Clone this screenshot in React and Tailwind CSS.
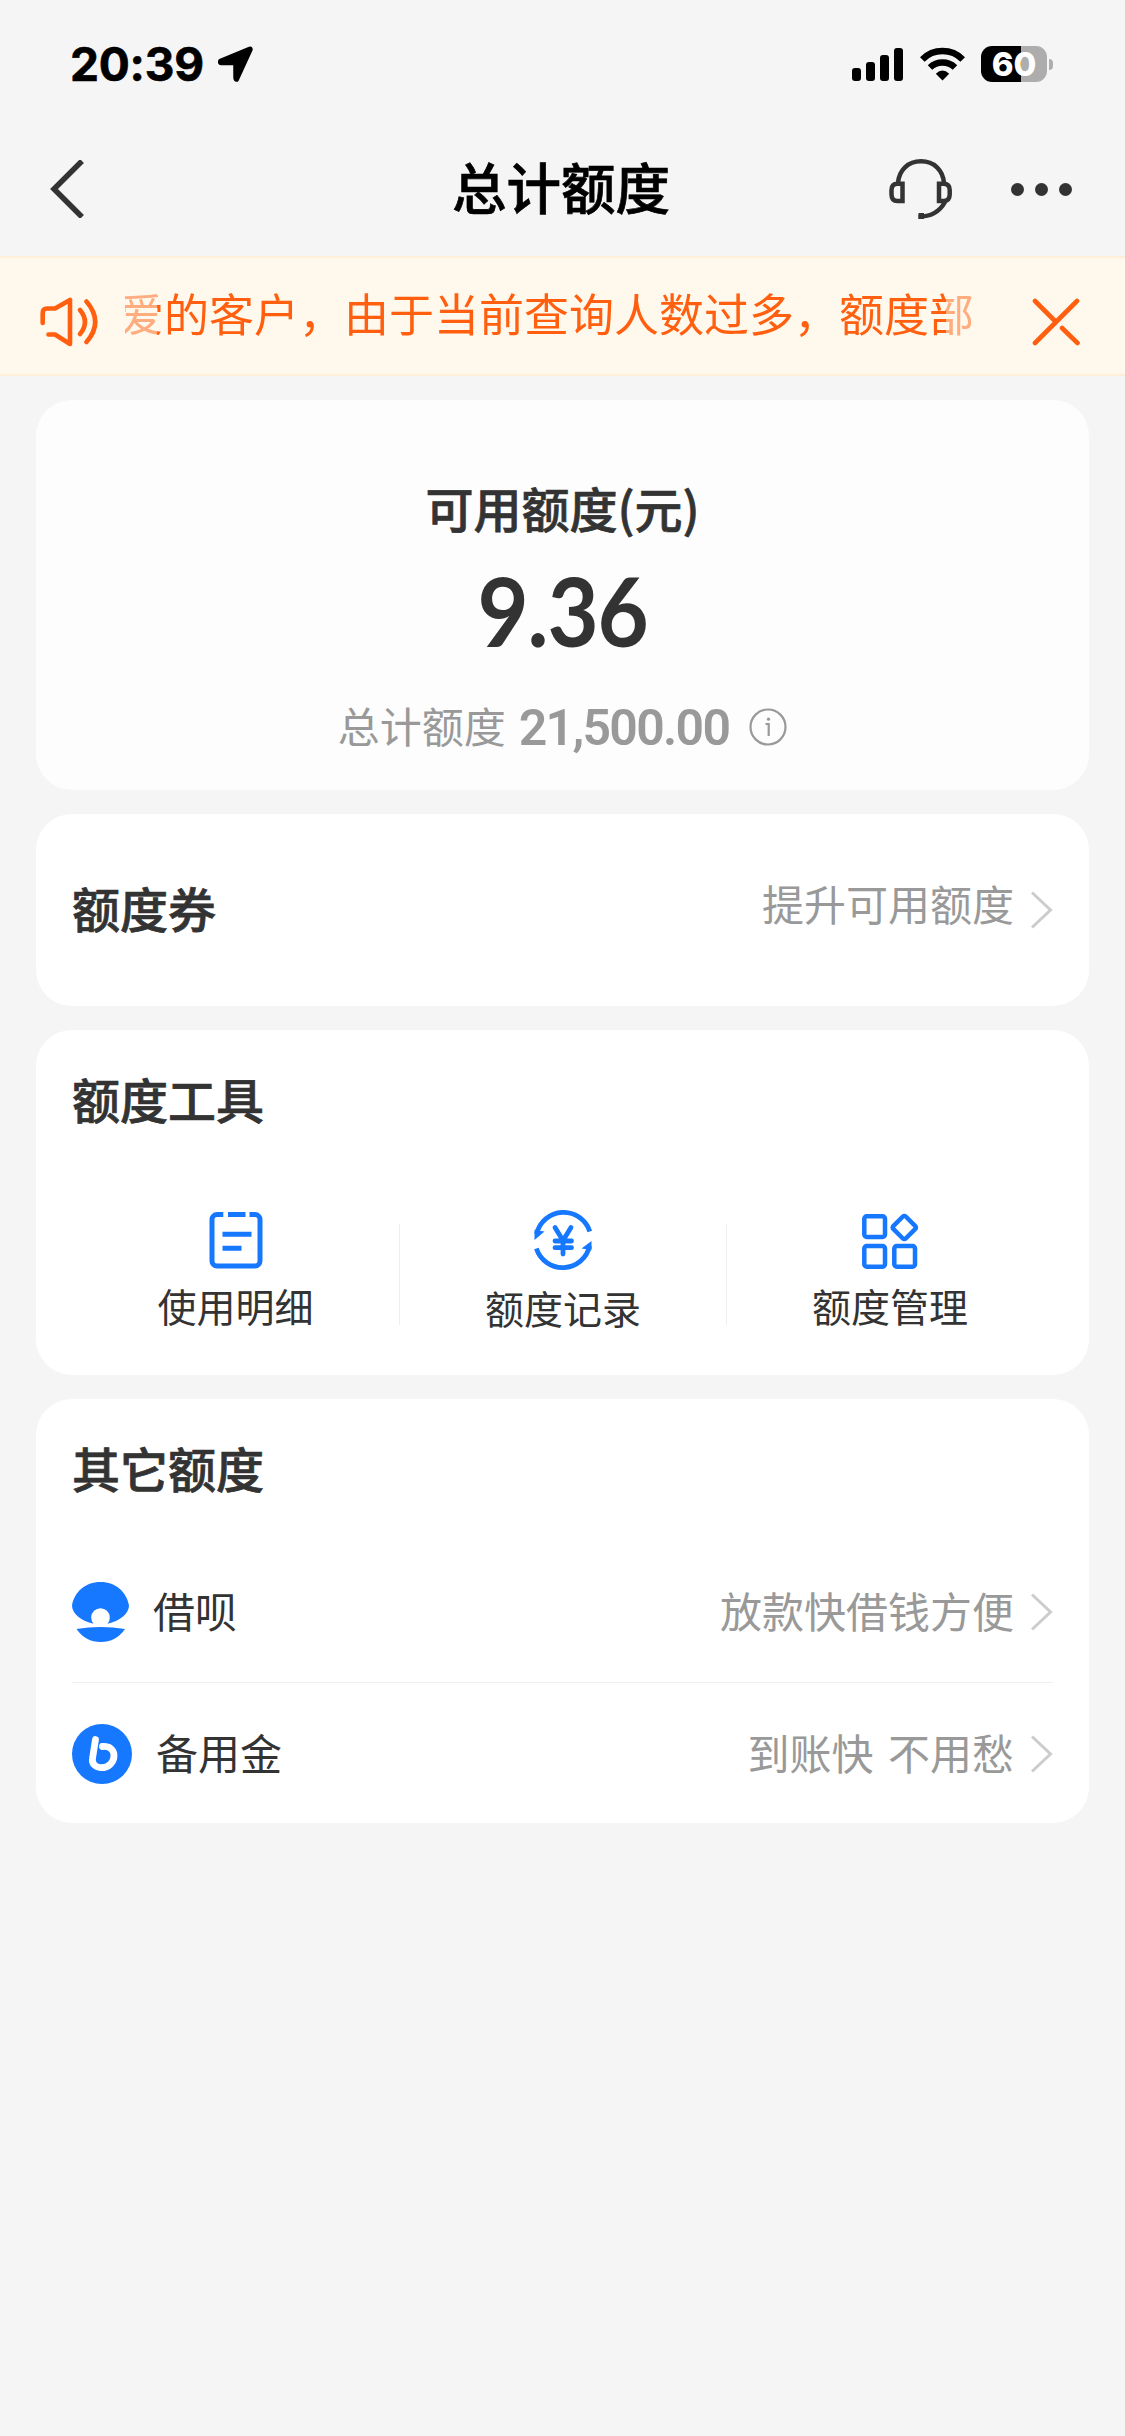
const tools = [
  { label: "使用明细", Icon: DetailIcon, labelClass: "mt-[14px]" },
  { label: "额度记录", Icon: RecordIcon, labelClass: "mt-[16px]" },
  { label: "额度管理", Icon: ManageIcon, labelClass: "mt-[14px]" },
];

const others = [
  { name: "借呗", desc: "放款快借钱方便", Icon: JiebeiIcon },
  { name: "备用金", desc: "到账快 不用愁", Icon: ReserveIcon },
];

function DetailIcon() {
  return (
    <svg className="w-[60px] h-[60px]" viewBox="0 0 60 60" fill="none" stroke="#1677ff" strokeWidth="5">
      <path d="M17.300 4.500H11a5 5 0 0 0-5 5v41.500A5 5 0 0 0 11 56H49a5 5 0 0 0 5-5v-41.500A5 5 0 0 0 49 4.500h-5.500" />
      <path d="M22 4.500h17.500M16.500 24.200H45.500M16.500 38.300H35.500" />
    </svg>
  );
}

function RecordIcon() {
  return (
    <svg className="w-[60px] h-[60px]" viewBox="0 0 60 60" fill="none" stroke="#1677ff" strokeWidth="4.800">
      <path d="M3.600 24A27.600 27.600 0 0 1 56.800 21.500" />
      <path d="M3.400 38.500A27.600 27.600 0 0 0 56.600 36" />
      <path d="M1.500 20l10 1.500L1.500 30z" fill="#1677ff" stroke="none" />
      <path d="M58.500 31v9l-10-1.500z" fill="#1677ff" stroke="none" />
      <path
        d="M22 17.500L30 30.500l8-13M30 30.500v13.500M22 31h16.500M22 37.700h16.500"
        strokeLinecap="round"
        strokeLinejoin="round"
      />
    </svg>
  );
}

function ManageIcon() {
  return (
    <svg className="w-[60px] h-[60px]" viewBox="0 0 60 60" fill="none" stroke="#1677ff" strokeWidth="4.500">
      <rect x="4.300" y="6.300" width="20.700" height="20.700" rx="2.500" />
      <rect x="4.300" y="36" width="20.700" height="20.700" rx="2.500" />
      <rect x="34.300" y="36" width="20.700" height="20.700" rx="2.500" />
      <rect x="35.500" y="8.700" width="17.600" height="17.600" rx="2" transform="rotate(45 44.300 17.500)" />
    </svg>
  );
}

function JiebeiIcon() {
  return (
    <svg className="w-[57px] h-[60px]" viewBox="0 0 57 60" fill="#1677ff">
      <path d="M28.500 0C44 0 54.500 10 57 23.500C57 32 47.500 39 35.500 41.700A9.300 9.300 0 1 0 21.500 41.700C9.500 39 0 32 0 23.500C2.500 10 13 0 28.500 0Z" />
      <path d="M4.500 47Q28.500 43 53 47Q44 60 28.700 60Q13.500 60 4.500 47Z" />
    </svg>
  );
}

function ReserveIcon() {
  return (
    <svg className="w-[60px] h-[60px]" viewBox="0 0 60 60" fill="none">
      <circle cx="30" cy="30" r="30" fill="#1677ff" />
      <path
        d="M23.500 15.500L20.500 34.500C19.500 40 24 43.700 29.500 43.700C36.500 43.700 42 38.500 42 31.500C42 25.500 37.500 22 30.500 22.500"
        stroke="#fff"
        strokeWidth="6.800"
        strokeLinecap="round"
      />
    </svg>
  );
}

function Arrow() {
  return (
    <svg className="w-[22px] h-[38px] shrink-0" viewBox="0 0 22 38" fill="none" stroke="#ccc" strokeWidth="3">
      <path d="M1 1.500L19.500 19L1 36.500" />
    </svg>
  );
}

const Title = ({ children }) => (
  <h2 className="text-[48px] font-medium leading-[48px] [-webkit-text-stroke:0.7px_#333]">{children}</h2>
);

const StatusBar = () => {
  return (
    <div className="flex h-[128px] items-center justify-between pl-[70px] pr-[72px]">
      <div className="flex items-center">
        <span className="font-['Inter',sans-serif] text-[46px] font-bold leading-none tracking-[-0.2px] text-black [-webkit-text-stroke:0.6px_#000]">
          20:39
        </span>
        <svg className="ml-[12px] w-[38px] h-[38px]" viewBox="0 0 38 38">
          <path
            d="M33 3.500L4 15.500Q3 18.500 5 18.500H19V32Q19 35.500 21 35L35 4.500Q35 2.500 33 3.500Z"
            stroke="#000"
            strokeWidth="3.500"
            strokeLinejoin="round"
          />
        </svg>
      </div>
      <div className="flex items-center">
        {/* Signal */}
        <div className="flex items-end gap-[5px] h-[33px]">
          <div className="w-[9px] h-[13px] rounded-[3px] bg-black" />
          <div className="w-[9px] h-[19px] rounded-[3px] bg-black" />
          <div className="w-[9px] h-[26px] rounded-[3px] bg-black" />
          <div className="w-[9px] h-[33px] rounded-[3px] bg-black" />
        </div>
        {/* Wifi */}
        <svg className="ml-[17px] w-[45px] h-[34px]" viewBox="0 0 45 34" fill="none" stroke="#000" strokeWidth="6.500">
          <path d="M2.300 12.500A28.500 28.500 0 0 1 42.700 12.500" />
          <path d="M10 20.500A18 18 0 0 1 35 20.500" />
          <path d="M22.500 33.500L15.800 26.700Q22.500 20.500 29.200 26.700Z" fill="#000" stroke="none" />
        </svg>
        {/* Battery */}
        <div className="ml-[16px] flex h-[36px] w-[66px] items-center justify-center rounded-[11px] bg-linear-to-r from-black from-[61%] to-[#adadad] to-[61%]">
          <span className="font-['Inter',sans-serif] text-[33px] font-extrabold leading-none text-white">60</span>
        </div>
        <div className="ml-[2px] h-[11px] w-[4px] rounded-r-full bg-[#adadad]" />
      </div>
    </div>
  );
};

const NavBar = () => {
  return (
    <div className="grid h-[128px] grid-cols-3 items-center pb-[6px] pl-[50px] pr-[53px]">
      <svg className="w-[34px] h-[58px]" viewBox="0 0 34 58" fill="none" stroke="#333" strokeWidth="5.500">
        <path d="M32 1L4 29L32 57" />
      </svg>
      <h1 className="-mt-[6px] whitespace-nowrap text-center text-[54.500px] font-medium leading-none text-black [-webkit-text-stroke:0.7px_#000]">
        总计额度
      </h1>
      <div className="flex items-center justify-end">
        <svg className="w-[63px] h-[60px]" viewBox="0 0 63 60" fill="none" stroke="#333" strokeWidth="4.500">
          <path d="M9 24C10 11 19 2.300 32 2.300S54 11 55 24" />
          <path d="M13.500 24.700H8.500Q2.500 24.700 2.500 31V35.500Q2.500 42 8.500 42H13.500Z" />
          <path d="M50 24.700H54.500Q60.700 24.700 60.700 31V35.500Q60.700 42 54.500 42H50Z" />
          <path d="M56 43C51 52 43 57.700 29.500 57.700" />
          <path d="M29.500 57H35" strokeWidth="6" />
        </svg>
        <div className="ml-[59px] flex gap-[11px]">
          <span className="size-[13px] rounded-full bg-[#333]" />
          <span className="size-[13px] rounded-full bg-[#333]" />
          <span className="size-[13px] rounded-full bg-[#333]" />
        </div>
      </div>
    </div>
  );
};

const NoticeBar = () => {
  return (
    <div className="flex h-[120px] items-center border-y-2 border-[#ffefd8] bg-[#fff8ec] pl-[38px] pr-[45px]">
      <svg
        className="mt-[12px] w-[60px] h-[52px] shrink-0"
        viewBox="0 0 60 52"
        fill="none"
        stroke="#ff5f0f"
        strokeWidth="4.600"
        strokeLinecap="round"
        strokeLinejoin="round"
      >
        <path d="M4.700 27V17Q4.700 12.500 9 12.500H17L32 4V48L17 38.500H10.500" />
        <path d="M42 14Q52 26 42 38" />
        <path d="M48.500 5.500Q66 26 48.500 46" />
      </svg>
      <div className="ml-[27px] w-[847px] overflow-hidden whitespace-nowrap mask-[linear-gradient(to_right,rgba(0,0,0,0.5)_32px,#000_32px,#000_821px,rgba(0,0,0,0.5)_821px)]">
        <p className="-ml-[6px] -mt-[6px] text-[45px] leading-[66px] text-[#ff5f0f]">
          爱的客户，由于当前查询人数过多，额度部
        </p>
      </div>
      <svg
        className="ml-auto mt-[12px] w-[48px] h-[48px] shrink-0"
        viewBox="0 0 48 48"
        fill="none"
        stroke="#ff5f0f"
        strokeWidth="4.600"
        strokeLinecap="round"
      >
        <path d="M45 3L3 45M3 3L24 24M30 30L45.500 45" />
      </svg>
    </div>
  );
};

const App = () => {
  return (
    <div className="flex min-h-[2436px] w-[1125px] flex-col bg-[#f5f5f5] font-['Noto_Sans_CJK_SC',sans-serif] text-[#333]">
      <StatusBar />
      <NavBar />
      <NoticeBar />

      <main className="flex flex-col gap-[24px] px-[36px] pt-[24px]">
        {/* Available amount */}
        <section className="flex h-[390px] flex-col items-center rounded-[36px] bg-[#fdfdfd] pt-[83px]">
          <Title>可用额度(元)</Title>
          <p className="mt-[31px] scale-x-[0.93] font-['Lato',sans-serif] text-[95px] font-bold leading-[96px] tracking-[-1.200px] [font-kerning:none]">
            9.36
          </p>
          <div className="mt-[43px] flex items-center text-[#999]">
            <span className="text-[42px] leading-[42px]">总计额度</span>
            <span className="ml-[13px] mt-[6px] font-['Roboto',sans-serif] text-[50px] font-semibold leading-[42px] tracking-[-1.700px]">
              21,500.00
            </span>
            <svg className="ml-[20px] mt-[4px] w-[38px] h-[38px]" viewBox="0 0 38 38" fill="none" stroke="#999" strokeWidth="2.200">
              <circle cx="19" cy="19" r="17.500" />
              <path d="M16.500 16H19.700V28" />
              <circle cx="19.500" cy="11.200" r="1.600" fill="#999" stroke="none" />
            </svg>
          </div>
        </section>

        {/* Coupon */}
        <section className="flex h-[192px] items-center rounded-[36px] bg-white px-[36px]">
          <div className="mb-[7px]">
            <Title>额度券</Title>
          </div>
          <span className="mb-[14px] ml-auto mr-[17px] text-[42px] leading-[42px] text-[#999]">提升可用额度</span>
          <Arrow />
        </section>

        {/* Tools */}
        <section className="h-[345px] rounded-[36px] bg-white px-[36px] pt-[44px]">
          <Title>额度工具</Title>
          <div className="mt-[88px] grid grid-cols-[328px_327px_1fr]">
            {tools.map(({ label, Icon, labelClass }, i) => (
              <div key={label} className="flex">
                <div className="flex flex-1 flex-col items-center">
                  <Icon />
                  <span className={`${labelClass} text-[39px] leading-[42px]`}>{label}</span>
                </div>
                {i < tools.length - 1 && <div className="mt-[14px] h-[101px] w-px bg-[#eee]" />}
              </div>
            ))}
          </div>
        </section>

        {/* Other limits */}
        <section className="h-[424px] rounded-[36px] bg-white px-[36px] pt-[44px]">
          <Title>其它额度</Title>
          <ul className="mt-[51px]">
            {others.map(({ name, desc, Icon }, i) => (
              <li
                key={name}
                className={`flex h-[141px] items-center ${i < others.length - 1 ? "border-b border-[#eee]" : ""}`}
              >
                <Icon />
                <span className="mb-[4px] ml-[24px] text-[42px] leading-[42px]">{name}</span>
                <span className="mb-[4px] ml-auto mr-[17px] text-[42px] leading-[42px] text-[#999] [word-spacing:5px]">
                  {desc}
                </span>
                <Arrow />
              </li>
            ))}
          </ul>
        </section>
      </main>
    </div>
  );
};

export default App;
